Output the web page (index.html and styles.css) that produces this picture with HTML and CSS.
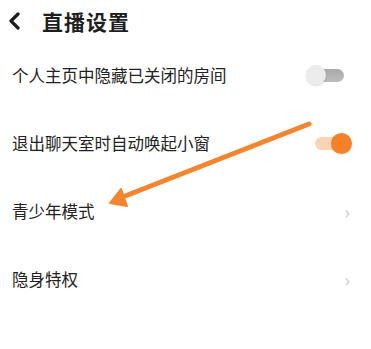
FILE: index.html
```html
<!DOCTYPE html>
<html lang="zh-CN">
<head>
    <meta charset="UTF-8">
    <meta name="viewport" content="width=device-width, initial-scale=1.0">
    <title>直播设置</title>
    <link rel="stylesheet" href="styles.css">
</head>
<body>

    <div class="page">
        <!-- top bar -->
        <div class="header">
            <svg class="back" width="14" height="18" viewBox="0 0 14 18">
                <path d="M10 2 L3 9 L10 16" fill="none" stroke="#1e1e1e" stroke-width="3.2" stroke-linecap="round" stroke-linejoin="round"/>
            </svg>
            <span class="title">直播设置</span>
        </div>

        <!-- settings list -->
        <div class="list">
            <div class="row">
                <span class="label">个人主页中隐藏已关闭的房间</span>
                <span class="switch"><span class="knob"></span></span>
            </div>
            <div class="row">
                <span class="label">退出聊天室时自动唤起小窗</span>
                <span class="switch on"><span class="knob"></span></span>
            </div>
            <div class="row">
                <span class="label">青少年模式</span>
                <span class="chevron">›</span>
            </div>
            <div class="row">
                <span class="label">隐身特权</span>
                <span class="chevron">›</span>
            </div>
        </div>

        <!-- annotation arrow drawn over the screenshot -->
        <svg class="arrow" width="371" height="349" viewBox="0 0 371 349">
            <line x1="309" y1="124" x2="120" y2="198" stroke="#f5842e" stroke-width="5" stroke-linecap="round"/>
            <polygon points="110,203 121,189 127,206" fill="#f5842e" stroke="#f5842e" stroke-width="2" stroke-linejoin="round"/>
        </svg>
    </div>

</body>
</html>
```

FILE: styles.css
```css
/* page base */
body {
    margin: 0;
    background-color: #ffffff;
    font-family: "Noto Sans CJK SC", "Noto Sans", sans-serif;
    color: #222222;
}

.page {
    position: relative;
    width: 371px;
    height: 349px;
    overflow: hidden;
}

.header {
    display: flex;
    align-items: center;
    height: 41px;
    padding-left: 8px;
}

.back {
    margin-top: 1px;
}

.title {
    margin-left: 20px;
    font-size: 21px;
    font-weight: bold;
    color: #1e1e1e;
    letter-spacing: 1px;
}

.list {
    display: flex;
    flex-direction: column;
}

.row {
    display: flex;
    align-items: center;
    justify-content: space-between;
    height: 68px;
    padding: 0 18px 0 12px;
}

.label {
    font-size: 16.5px;
    color: #222222;
}

/* toggle switch */
.switch {
    position: relative;
    width: 36px;
    height: 13px;
    border-radius: 7px;
    background: linear-gradient(#a9a9a9, #bdbdbd);
    margin-right: 9px;
}

.switch .knob {
    position: absolute;
    left: -2px;
    top: -4px;
    width: 20px;
    height: 20px;
    border-radius: 50%;
    background-color: #ececec;
    box-shadow: 0 1px 2px rgba(0, 0, 0, 0.15);
}

.switch.on {
    width: 30px;
    background: #fcd3b3;
    margin-right: 8px;
}

.switch.on .knob {
    left: auto;
    right: -7px;
    width: 21px;
    height: 21px;
    top: -4px;
    background-color: #f5802a;
    box-shadow: 0 1px 2px rgba(0, 0, 0, 0.12);
}

.chevron {
    font-size: 18px;
    color: #c6c6c6;
    margin-right: 3px;
    line-height: 1;
}

.arrow {
    position: absolute;
    left: 0;
    top: 0;
    pointer-events: none;
}
```
